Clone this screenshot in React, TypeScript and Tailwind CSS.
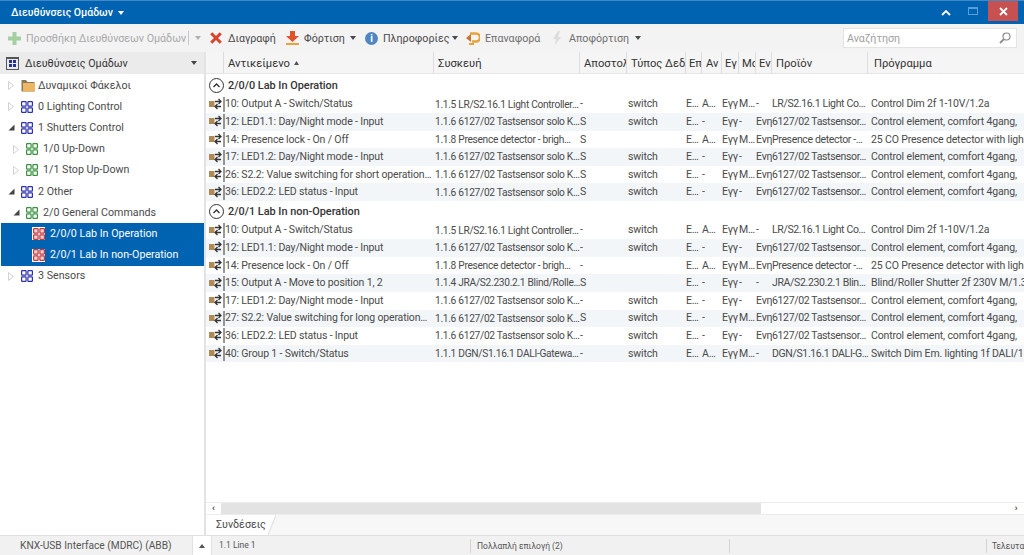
import React from "react";

const rowGrid = "grid grid-cols-[18px_210px_146px_47px_59px_16px_20px_17px_17px_16px_96px_156px]";

type Row = string[];

const lr = ["1.1.5 LR/S2.16.1 Light Controller…", "LR/S2.16.1 Light Co…", "Control Dim 2f 1-10V/1.2a"];
const solo = ["1.1.6 6127/02 Tastsensor solo K…", "6127/02 Tastsensor…", "Control element, comfort 4gang,"];
const presence = ["1.1.8 Presence detector - brigh…", "Presence detector -…", "25 CO Presence detector with ligh"];

function row(name: string, dev: string[], send: string, type: string, a: string, m: string, ev: string): Row {
  return [name, dev[0], send, type, "E…", a, "Εγγ", m, ev, dev[1], dev[2]];
}

const firstGroup: Row[] = [
  row("10: Output A - Switch/Status", lr, "-", "switch", "A…", "M…", "-"),
  row("12: LED1.1: Day/Night mode - Input", solo, "S", "switch", "-", "-", "Ενη"),
  row("14: Presence lock - On / Off", presence, "S", "", "A…", "M…", "Ενη"),
  row("17: LED1.2: Day/Night mode - Input", solo, "S", "switch", "-", "-", "Ενη"),
  row("26: S2.2: Value switching for short operation…", solo, "S", "switch", "-", "M…", "Ενη"),
  row("36: LED2.2: LED status - Input", solo, "S", "switch", "-", "-", "Ενη"),
];

const secondGroup: Row[] = [
  row("10: Output A - Switch/Status", lr, "-", "switch", "A…", "M…", "-"),
  row("12: LED1.1: Day/Night mode - Input", solo, "-", "switch", "-", "-", "Ενη"),
  row("14: Presence lock - On / Off", presence, "-", "", "A…", "M…", "Ενη"),
  row("15: Output A - Move to position 1, 2", ["1.1.4 JRA/S2.230.2.1 Blind/Rolle…", "JRA/S2.230.2.1 Blin…", "Blind/Roller Shutter 2f 230V M/1.3"], "S", "", "-", "-", "-"),
  row("17: LED1.2: Day/Night mode - Input", solo, "-", "switch", "-", "-", "Ενη"),
  row("27: S2.2: Value switching for long operation…", solo, "S", "switch", "-", "M…", "Ενη"),
  row("36: LED2.2: LED status - Input", solo, "-", "switch", "-", "-", "Ενη"),
  row("40: Group 1 - Switch/Status", ["1.1.1 DGN/S1.16.1 DALI-Gatewa…", "DGN/S1.16.1 DALI-G…", "Switch Dim Em. lighting 1f DALI/1."], "-", "switch", "A…", "M…", "-"),
];

const headers = [
  ["", ""],
  ["Αντικείμενο", "pl-[4px]"],
  ["Συσκευή", "pl-[4px]"],
  ["Αποστολ", "pl-[4px]"],
  ["Τύπος Δεδ", "pl-[4px]"],
  ["Επ", "pl-[3px]"],
  ["Αν", "pl-[4px]"],
  ["Εγ", "pl-[3px]"],
  ["Μα", "pl-[3px]"],
  ["Εν", "pl-[3px]"],
  ["Προϊόν", "pl-[4px]"],
  ["Πρόγραμμα", "pl-[6px]"],
];

function GroupIcon({ color, fill = "none" }: { color: string; fill?: string }) {
  return (
    <svg width="12" height="12" viewBox="0 0 12 12" className="shrink-0">
      {[0.6, 6.9].map((x) =>
        [0.6, 6.9].map((y) => (
          <rect key={`${x}-${y}`} x={x} y={y} width="4.5" height="4.5" rx="0.6" fill={fill} stroke={color} strokeWidth="1.2" />
        ))
      )}
    </svg>
  );
}

function SelectedGroupIcon() {
  return (
    <div className="w-[13px] h-[13px] bg-white flex items-center justify-center shrink-0">
      <GroupIcon color="#c8373c" fill="#f4d5d5" />
    </div>
  );
}

function Folder() {
  return (
    <svg width="14" height="13" viewBox="0 0 14 13" className="shrink-0">
      <path d="M0.5 1h4.5l1.5 2h7v9.5h-13z" fill="#8a7a5c" />
      <rect x="2" y="4" width="12" height="8.5" fill="#eeb562" />
    </svg>
  );
}

function Caret({ open = false }: { open?: boolean }) {
  if (open) {
    return (
      <svg width="7" height="7" viewBox="0 0 7 7" className="shrink-0">
        <path d="M6.5 0.5v6h-6z" fill="#444" />
      </svg>
    );
  }
  return (
    <svg width="6" height="9" viewBox="0 0 6 9" className="shrink-0">
      <path d="M0.5 0.5l5 4-5 4z" fill="none" stroke="#d2d2d2" />
    </svg>
  );
}

function TreeRow({
  level,
  label,
  icon,
  open,
  selected,
  noCaret,
  gap = "ml-[5px]",
}: {
  level: "pl-[6px]" | "pl-[11px]" | "pl-[31px]";
  label: string;
  icon: React.ReactNode;
  open?: boolean;
  selected?: boolean;
  noCaret?: boolean;
  gap?: "ml-[3px]" | "ml-[5px]";
}) {
  return (
    <div className={`h-[21.2px] flex items-center ${level} ${selected ? "bg-[#0063b1] text-white" : "text-[#4a4a4a]"}`}>
      {!noCaret && (
        <div className="w-[8px] mr-[6px] flex justify-center">
          <Caret open={open} />
        </div>
      )}
      {icon}
      <span className={`${gap} whitespace-nowrap`}>{label}</span>
    </div>
  );
}

function LinkIcon() {
  return (
    <svg width="16" height="15" viewBox="0 0 16 15" className="shrink-0 ml-[3px]">
      <rect x="0" y="4" width="5.5" height="6" fill="#b08a55" />
      <path d="M6 4.5h6M9.5 2l2.5 2.5L9.5 7M12 9.5H6M8.5 7L6 9.5 8.5 12" fill="none" stroke="#333" strokeWidth="1.3" />
      <path d="M15 0v15" stroke="#333" strokeWidth="1" />
    </svg>
  );
}

function GroupHeader({ label, className }: { label: string; className: string }) {
  return (
    <div className={`flex items-center pl-[3px] ${className}`}>
      <div className="w-[15px] h-[15px] rounded-full border border-[#333] flex items-center justify-center shrink-0">
        <svg width="7" height="5" viewBox="0 0 7 5">
          <path d="M0.5 4l3-3 3 3" fill="none" stroke="#333" strokeWidth="1.4" />
        </svg>
      </div>
      <span className="ml-[4px] pt-px text-[10.9px] font-medium text-[#333] whitespace-nowrap">{label}</span>
    </div>
  );
}

function DataRow({ cells, shaded }: { cells: Row; shaded: boolean }) {
  return (
    <div className={`${rowGrid} h-[17.6px] items-center text-[10.5px] tracking-[-0.15px] ${shaded ? "bg-[#f3f6f9]" : ""}`}>
      <LinkIcon />
      {cells.map((text, i) => (
        <div key={i} className={`overflow-hidden whitespace-nowrap ${i === 0 ? "pl-[1px]" : ""} ${i === 3 ? "pl-[1px]" : ""} ${i === 10 ? "pl-[3px]" : ""} ${i === 1 ? "pl-[1px] text-[10.2px] tracking-[-0.3px]" : ""} ${i === 9 ? "tracking-[-0.35px]" : ""}`}>
          {text}
        </div>
      ))}
    </div>
  );
}

function Dropdown({ className = "text-[#555]" }: { className?: string }) {
  return (
    <svg width="6" height="4" viewBox="0 0 6 4" className={`shrink-0 ${className}`}>
      <path d="M0 0h6L3 4z" fill="currentColor" />
    </svg>
  );
}

function Toolbar() {
  return (
    <div className="h-[28px] bg-[#f3f3f3] flex items-center text-[#4a4a4a] pl-[8px] pr-[7px]">
      <svg width="13" height="13" viewBox="0 0 13 13" className="shrink-0">
        <path d="M6.5 0v13M0 6.5h13" stroke="#a5cfa0" strokeWidth="4" />
      </svg>
      <span className="ml-[5px] w-[162px] pt-[2px] whitespace-nowrap text-[#a8a8a8]">Προσθήκη Διευθύνσεων Ομάδων</span>
      <div className="w-px h-[14px] bg-[#c8c8c8]" />
      <Dropdown className="ml-[6px] text-[#b0b0b0]" />
      <svg width="12" height="12" viewBox="0 0 12 12" className="ml-[9px] shrink-0">
        <path d="M1.2 1.2l9.6 9.6M10.8 1.2l-9.6 9.6" stroke="#d8432b" strokeWidth="3" />
      </svg>
      <span className="ml-[6px] w-[47px] pt-[2px] whitespace-nowrap">Διαγραφή</span>
      <svg width="13" height="14" viewBox="0 0 13 14" className="ml-[11px] shrink-0">
        <path d="M4 0h5v5h4l-6.5 6L0 5h4z" fill="#e0532a" />
        <path d="M0 12h13v2H0z" fill="#e8a23a" />
      </svg>
      <span className="ml-[5px] w-[41px] pt-[2px] whitespace-nowrap">Φόρτιση</span>
      <Dropdown className="ml-[5px]" />
      <div className="ml-[9px] w-[13px] h-[13px] rounded-full bg-[#4f86c0] text-white flex items-center justify-center text-[10px] font-bold shrink-0">i</div>
      <span className="ml-[5px] w-[65px] pt-[2px] whitespace-nowrap">Πληροφορίες</span>
      <Dropdown className="ml-[4px]" />
      <svg width="14" height="13" viewBox="0 0 14 13" className="ml-[8px] shrink-0">
        <path d="M4 1.5h6a3.5 3.5 0 0 1 0 8H6" fill="none" stroke="#e8a23a" strokeWidth="2.6" />
        <path d="M0 6l5-4v8z" fill="#c8742a" />
        <path d="M3 11h5v2H3z" fill="#e8a23a" />
      </svg>
      <span className="ml-[5px] w-[56px] pt-[2px] whitespace-nowrap text-[#6f6f6f]">Επαναφορά</span>
      <svg width="8" height="14" viewBox="0 0 8 14" className="ml-[12px] shrink-0">
        <path d="M5 0L0 8h3l-1 6 6-8H5l2-6z" fill="#dcdcdc" />
      </svg>
      <span className="ml-[8px] w-[61px] pt-[2px] whitespace-nowrap text-[#6f6f6f]">Αποφόρτιση</span>
      <Dropdown className="ml-[5px]" />
      <div className="ml-auto w-[174px] h-[20px] bg-white border border-[#e4e4e4] flex items-center justify-between pl-[3px] pr-[5px]">
        <span className="pt-[2px] text-[#a0a0a0]">Αναζήτηση</span>
        <svg width="12" height="12" viewBox="0 0 12 12">
          <circle cx="7.5" cy="4.5" r="3.5" fill="none" stroke="#8c8c8c" strokeWidth="1.2" />
          <path d="M5 7l-4 4" stroke="#8c8c8c" strokeWidth="1.8" />
        </svg>
      </div>
    </div>
  );
}

function Sidebar() {
  return (
    <aside className="w-[204px] shrink-0 flex flex-col">
      <div className="h-[22px] bg-[#ebebeb] flex items-center pl-[6px] pr-[7px] text-[#333]">
        <div className="w-[13px] h-[13px] border border-[#555] border-t-[2px] flex items-center justify-center shrink-0">
          <svg width="7" height="7" viewBox="0 0 7 7">
            <path d="M0 0h3v3H0zM4 0h3v3H4zM0 4h3v3H0zM4 4h3v3H4z" fill="#26329a" />
          </svg>
        </div>
        <span className="ml-[6px] pt-[3px] whitespace-nowrap">Διευθύνσεις Ομάδων</span>
        <Dropdown className="ml-auto text-[#444]" />
      </div>
      <div className="flex-1 bg-white pl-px pt-px">
        <TreeRow level="pl-[6px]" label="Δυναμικοί Φάκελοι" icon={<Folder />} gap="ml-[3px]" />
        <TreeRow level="pl-[6px]" label="0 Lighting Control" icon={<GroupIcon color="#2a2fb0" />} />
        <TreeRow level="pl-[6px]" label="1 Shutters Control" icon={<GroupIcon color="#2a2fb0" />} open />
        <TreeRow level="pl-[11px]" label="1/0 Up-Down" icon={<GroupIcon color="#3a9140" />} />
        <TreeRow level="pl-[11px]" label="1/1 Stop Up-Down" icon={<GroupIcon color="#3a9140" />} />
        <TreeRow level="pl-[6px]" label="2 Other" icon={<GroupIcon color="#2a2fb0" />} open />
        <TreeRow level="pl-[11px]" label="2/0 General Commands" icon={<GroupIcon color="#3a9140" />} open />
        <TreeRow level="pl-[31px]" label="2/0/0 Lab In Operation" icon={<SelectedGroupIcon />} selected noCaret />
        <TreeRow level="pl-[31px]" label="2/0/1 Lab In non-Operation" icon={<SelectedGroupIcon />} selected noCaret />
        <TreeRow level="pl-[6px]" label="3 Sensors" icon={<GroupIcon color="#2a2fb0" />} />
      </div>
    </aside>
  );
}

function Table() {
  return (
    <section className="flex-1 min-w-0 flex flex-col border-l-2 border-[#e3e3e3]">
      <div className={`${rowGrid} h-[22px] bg-[#f5f5f5] border-b border-[#e6e6e6] text-[11.2px] text-[#333]`}>
        {headers.map(([label, pad], i) => (
          <div key={i} className={`overflow-hidden whitespace-nowrap flex items-center pt-[4px] ${pad} ${i < 11 ? "border-r border-[#dcdcdc]" : ""}`}>
            {label}
            {i === 1 && (
              <svg width="5" height="4" viewBox="0 0 5 4" className="ml-[4px] mb-[4px]">
                <path d="M0 4h5L2.5 0z" fill="#555" />
              </svg>
            )}
          </div>
        ))}
      </div>
      <div className="flex-1 bg-white min-h-0 pt-[1.5px] text-[#4a4a4a]">
        <GroupHeader label="2/0/0 Lab In Operation" className="h-[20px]" />
        {firstGroup.map((cells, i) => (
          <DataRow key={i} cells={cells} shaded={i % 2 === 1} />
        ))}
        <GroupHeader label="2/0/1 Lab In non-Operation" className="h-[19.5px] mt-[1px]" />
        {secondGroup.map((cells, i) => (
          <DataRow key={i} cells={cells} shaded={i % 2 === 1} />
        ))}
      </div>
      <div className="h-[12px] bg-white border-t border-[#ececec] flex items-center shrink-0">
        <div className="w-[15px] text-center text-[9px] leading-none font-bold text-[#333]">‹</div>
        <div className="w-[540px] h-full bg-[#e3e3e3]" />
        <div className="ml-auto w-[16px] text-center text-[9px] leading-none font-bold text-[#333]">›</div>
      </div>
      <div className="h-[21px] bg-[#f7f7f7] border-t border-[#ececec] flex items-stretch shrink-0">
        <div className="w-[62px] bg-white pl-[10px] flex items-center text-[#4a4a4a]">Συνδέσεις</div>
        <svg width="8" height="20" viewBox="0 0 8 20" className="shrink-0">
          <path d="M0 0h8L0 20z" fill="#fff" />
          <path d="M8 0L0 20" stroke="#dcdcdc" />
        </svg>
      </div>
    </section>
  );
}

function StatusBar() {
  return (
    <footer className="h-[20px] bg-[#f1f1f1] border-t border-[#e0e0e0] flex items-center text-[8.5px] text-[#555] shrink-0">
      <div className="w-[192px] pl-[20px] text-[10.2px] whitespace-nowrap">KNX-USB Interface (MDRC) (ABB)</div>
      <div className="w-[20px] h-full bg-white border-x border-[#e0e0e0] flex items-center justify-center">
        <svg width="6" height="4" viewBox="0 0 6 4">
          <path d="M0 4h6L3 0z" fill="#555" />
        </svg>
      </div>
      <div className="w-[258px] pl-[7px] whitespace-nowrap">1.1 Line 1</div>
      <div className="w-[259px] h-[14px] pl-[6px] border-l border-[#d4d4d4] whitespace-nowrap leading-[14px]">Πολλαπλή επιλογή (2)</div>
      <div className="w-[257px] h-[14px] border-l border-[#d4d4d4]" />
      <div className="flex-1 h-[14px] pl-[5px] border-l border-[#d4d4d4] whitespace-nowrap overflow-hidden leading-[14px]">Τελευταί</div>
    </footer>
  );
}

export default function App() {
  return (
    <div className="w-[1024px] h-[555px] overflow-hidden flex flex-col bg-white text-[10.7px] font-['Roboto',sans-serif]">
      <header className="h-[24px] bg-[#0063b1] border-t border-[#3f8ac6] flex items-center pl-[11px] shrink-0">
        <span className="text-[10.5px] font-medium text-white whitespace-nowrap">Διευθύνσεις Ομάδων</span>
        <Dropdown className="ml-[5px] text-white" />
        <svg width="10" height="6" viewBox="0 0 10 6" className="ml-auto mr-[17px]">
          <path d="M1 5l4-4 4 4" fill="none" stroke="#fff" strokeWidth="1.8" />
        </svg>
        <div className="w-[10px] h-[8px] border border-[#5aa0d8] border-t-2 mr-[10px] mb-[4px]" />
        <div className="w-[30px] h-[20px] bg-[#c75050] text-white flex items-center justify-center mr-[6px] mb-[3px]">
          <svg width="9" height="9" viewBox="0 0 9 9">
            <path d="M1 1l7 7M8 1L1 8" stroke="#fff" strokeWidth="1.8" />
          </svg>
        </div>
      </header>
      <Toolbar />
      <div className="flex-1 min-h-0 flex">
        <Sidebar />
        <Table />
      </div>
      <StatusBar />
    </div>
  );
}
